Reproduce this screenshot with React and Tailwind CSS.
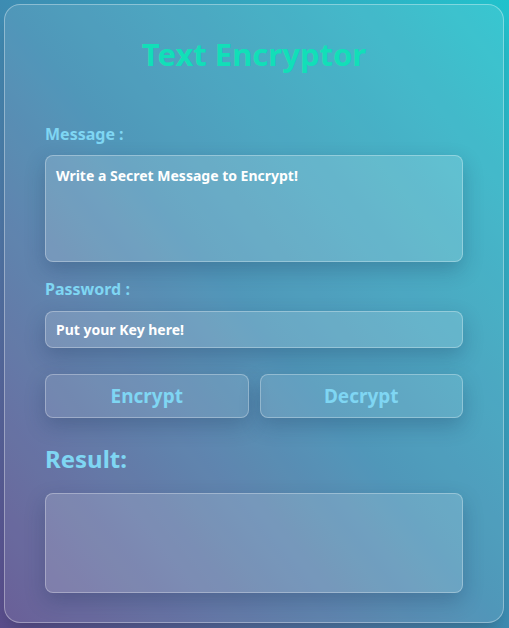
import React, { useState } from "react";

export default function App() {
  const [message, setMessage] = useState("");
  const [key, setKey] = useState("");
  const [result, setResult] = useState("");

  const font = { fontFamily: '"Noto Sans", "Open Sans", sans-serif' };

  return (
    <div
      className="w-[509px] h-[628px] bg-linear-to-tr from-[#5a4d8c] via-[#3d8cb2] to-[#20c2cc] p-1"
      style={font}
    >
      <div className="w-[500px] h-[619px] rounded-2xl border border-white/35 bg-white/10 shadow-xl px-[40px] pt-[30px] pb-[29px] flex flex-col">
        {/* Title */}
        <h1 className="text-center text-[31px] leading-[38px] font-bold text-[#12dfb8]">
          Text Encryptor
        </h1>

        {/* Message */}
        <label className="mt-[51px] text-[16px] leading-[20px] font-bold text-[#7fd6f3]">
          Message :
        </label>
        <textarea
          value={message}
          onChange={(e) => setMessage(e.target.value)}
          placeholder="Write a Secret Message to Encrypt!"
          className="mt-[11px] h-[107px] resize-none rounded-lg border border-white/30 bg-white/15 px-[10px] py-[10px] text-[14px] leading-[20px] font-bold text-white placeholder:text-white outline-none shadow-[0_8px_20px_rgba(20,40,80,0.25)]"
        />

        {/* Password */}
        <label className="mt-[17px] text-[16px] leading-[20px] font-bold text-[#7fd6f3]">
          Password :
        </label>
        <input
          value={key}
          onChange={(e) => setKey(e.target.value)}
          placeholder="Put your Key here!"
          className="mt-[12px] h-[38px] rounded-lg border border-white/30 bg-white/15 px-[10px] text-[14px] font-bold text-white placeholder:text-white outline-none shadow-[0_8px_20px_rgba(20,40,80,0.25)]"
        />

        {/* Buttons */}
        <div className="mt-[26px] flex gap-[11px]">
          <button
            onClick={() => setResult(btoa(message + key))}
            className="flex-1 h-[44px] rounded-lg border border-white/30 bg-white/10 text-[19px] font-bold text-[#7fd6f3] shadow-[0_8px_20px_rgba(20,40,80,0.25)]"
          >
            Encrypt
          </button>
          <button
            onClick={() => setResult(message)}
            className="flex-1 h-[44px] rounded-lg border border-white/30 bg-white/10 text-[19px] font-bold text-[#7fd6f3] shadow-[0_8px_20px_rgba(20,40,80,0.25)]"
          >
            Decrypt
          </button>
        </div>

        {/* Result */}
        <h2 className="mt-[27px] text-[24px] leading-[28px] font-bold text-[#7fd6f3]">
          Result:
        </h2>
        <div className="mt-[20px] h-[100px] rounded-lg border border-white/30 bg-white/15 px-[10px] py-[10px] text-[14px] font-bold text-white shadow-[0_8px_20px_rgba(20,40,80,0.25)]">
          {result}
        </div>
      </div>
    </div>
  );
}
